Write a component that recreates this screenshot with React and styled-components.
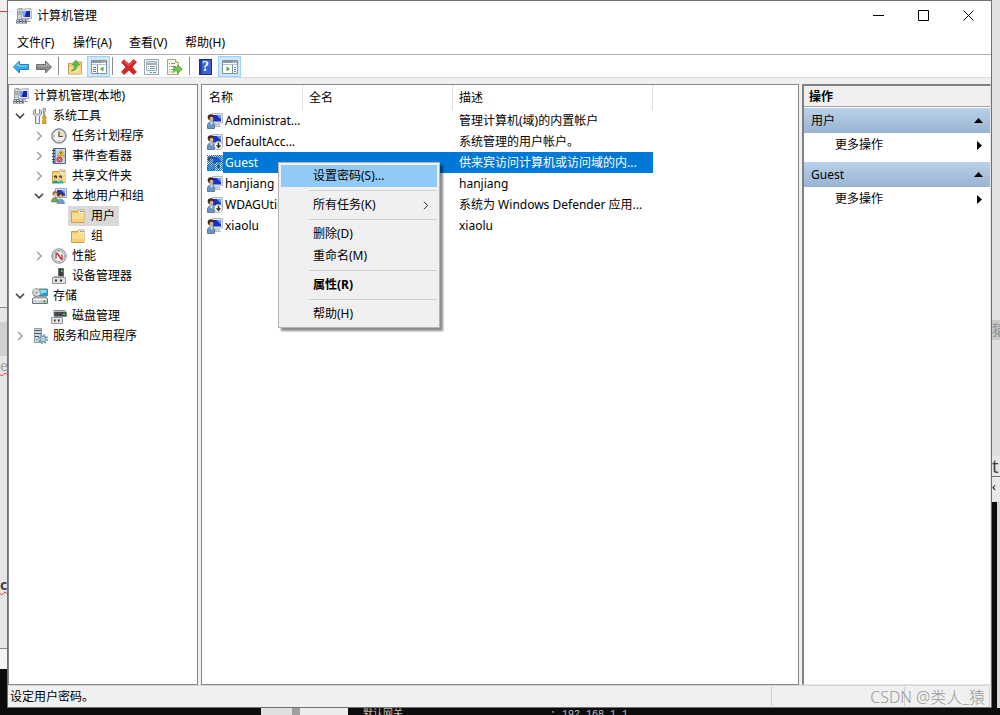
import React, { useState } from "react";
import styled, { createGlobalStyle, css } from "styled-components";

const GlobalStyle = createGlobalStyle`
    * {
        box-sizing: border-box;
    }

    body {
        margin: 0;
        background: #0c0c0c;
        color: #000;
        font-family: "Noto Sans", "Noto Sans CJK SC", sans-serif;
        font-size: 12px;
        line-height: 20px;
    }

    button {
        margin: 0;
        padding: 0;
        border: 0;
        background: none;
        color: inherit;
        font: inherit;
        text-align: left;
    }
`;

/* ---------- icons ---------- */

const Svg = ({ children, size = 16 }) => (
    <svg width={size} height={size} viewBox="0 0 16 16" aria-hidden="true">{children}</svg>
);

const ComputerIcon = () => (
    <Svg>
        <path d="M1.500 1.500 3 .5h3v11H1.500z" fill="#d3d6d9" stroke="#9a9ea3" />
        <path d="M2 4h3M2 6h3" stroke="#85898d" />
        <path d="M5 1.500 15 .5l.5 10H5.500z" fill="#e4e7ec" stroke="#a5abb4" />
        <path d="M6.500 3h7.500v6H7z" fill="#1226b8" />
        <path d="M6.500 3h4L8.500 9H7z" fill="#7fa2ee" />
        <path d="M9 11h4v1.500H9z" fill="#a9adb3" />
        <path d="M9 13h6v1H9z" fill="#9ba0a7" />
        <path d="M.5 11.500h9.500l1 4H0z" fill="#5f6b76" />
        <path d="M1 12.500h8M1 14.500h9" stroke="#c6d0da" strokeDasharray="2 1" />
    </Svg>
);

const ToolsIcon = () => (
    <Svg>
        <path d="M3.500 1v4.500l2 1 2-1V1l2 2v3.500L7.500 8v7.500h-4V8L1.500 6.500V3z" fill="#d9dcdf" stroke="#7d8184" strokeWidth=".9" />
        <path d="M5.500 8v7" stroke="#fff" />
        <path d="M11 .5h2.500V3l-.7 1v4h-1.200V4L11 3z" fill="#c4c7ca" stroke="#77797c" strokeWidth=".7" />
        <path d="M10.500 8.500h3.500v2l-.8 1 .8 1.500v2.500h-3.500V13l.8-1.500-.8-1z" fill="#f2ab1d" stroke="#b97708" strokeWidth=".7" />
    </Svg>
);

const ClockIcon = () => (
    <Svg>
        <circle cx="8" cy="8" r="7.200" fill="#b9bcc0" stroke="#6d7176" strokeWidth="1" />
        <circle cx="8" cy="8" r="5.700" fill="#f8f3e6" stroke="#d9dbdd" />
        <path d="M8 8V2.800A5.200 5.200 0 0 1 13.200 8z" fill="#f3d79c" />
        <path d="M8 3.500V8.500h4" stroke="#3d5068" strokeWidth="1.200" fill="none" />
        <path d="M3 8h1M8 13v-1" stroke="#7c8690" />
    </Svg>
);

const EventIcon = () => (
    <Svg>
        <path d="M2.500 .5h12v15h-12z" fill="#7f9bd0" stroke="#4c628f" />
        <path d="M5 1h9v14H5z" fill="#cfdcf2" />
        <path d="M5 4h9M5 7h9M5 10h9M5 13h9" stroke="#8fa7d2" strokeWidth=".7" />
        <path d="M1 2.500h3M1 5.500h3M1 8.500h3M1 11.500h3M1 14h3" stroke="#3b4554" />
        <path d="M10 2l3.500 6h-7z" fill="#ffd324" stroke="#b88b00" strokeWidth=".7" />
        <path d="M10 4v2M10 6.700v.8" stroke="#3b2f00" />
        <circle cx="8.500" cy="11.500" r="2.600" fill="#e0404a" stroke="#9c2530" strokeWidth=".6" />
        <path d="M7.500 10.500l2 2M9.500 10.500l-2 2" stroke="#fff" strokeWidth=".8" />
    </Svg>
);

const Folder = ({ children }) => (
    <Svg>
        <path d="M1.500 3.500h6l1-1.500h5.500v12.500H1.500z" fill="#efc668" stroke="#cf9f3c" />
        <path d="M9 2.500h5v3H9z" fill="#fff" />
        <path d="M10 3.500h1.500" stroke="#3c8ed8" />
        <path d="M12 3.500h2" stroke="#6aa9e0" />
        <path d="M2 5.500h6l1-1h5V14H2z" fill="#fbdd8f" />
        <path d="M2 11h12v3H2z" fill="#f6d07a" />
        {children}
    </Svg>
);

const SharedIcon = () => (
    <Folder>
        <circle cx="4.500" cy="9" r="1.800" fill="#4b3524" />
        <circle cx="9.500" cy="9" r="1.800" fill="#6a4a30" />
        <circle cx="4" cy="10" r="1" fill="#e0b48a" />
        <circle cx="9" cy="10" r="1" fill="#e0b48a" />
        <path d="M1 15.500c0-3 6-5 6.500 0z" fill="#2d9b6c" />
        <path d="M6.500 15.500c0-3 6-5 6 0z" fill="#35aebc" />
    </Folder>
);

const GroupIcon = () => (
    <Svg>
        <path d="M4.500 .5h11v9h-11z" fill="#dfe3ea" stroke="#9aa4b2" />
        <path d="M6 2h8v6H6z" fill="#1c35c9" />
        <path d="M10 2h4v4z" fill="#7ba3f3" />
        <circle cx="4" cy="5.500" r="2.500" fill="#9a6a34" />
        <circle cx="4.500" cy="6.700" r="1.700" fill="#e7bd92" />
        <path d="M.5 14c0-6 6.500-6 7 0z" fill="#7ba650" stroke="#567a34" strokeWidth=".6" />
        <circle cx="9.500" cy="7" r="2.500" fill="#4a382c" />
        <circle cx="9.800" cy="8.200" r="1.600" fill="#e0b088" />
        <path d="M6 15.500c0-6 7-6 7.500 0z" fill="#6d9fd6" stroke="#44709f" strokeWidth=".6" />
    </Svg>
);

const GaugeIcon = () => (
    <Svg>
        <circle cx="8" cy="8" r="7.200" fill="#e2e4e6" stroke="#85898d" />
        <circle cx="8" cy="8" r="5.500" fill="#fff" stroke="#a2a7ab" />
        <path d="M5 10.500V6l1.500-.5L10 11h1V6.500" fill="none" stroke="#c62828" strokeWidth="1.400" />
        <path d="M4.500 5l1-1M7.500 3.500h1M11 4.500l.5.8" stroke="#555" />
    </Svg>
);

const DeviceIcon = () => (
    <Svg>
        <path d="M7.500 .5h5v8h-5z" fill="#393d40" stroke="#6a6e71" />
        <path d="M10 2h1.500v2H10z" fill="#43d65e" />
        <path d="M1.500 9.500h13v6h-13z" fill="#dedfe1" stroke="#96999c" />
        <path d="M3 8.500h9" stroke="#a4a8ab" />
        <path d="M4 11.500h2v2H4zM9 11.500h2v2H9z" fill="#292c2e" />
    </Svg>
);

const StorageIcon = () => (
    <Svg>
        <path d="M7 1h8.500v7H7z" fill="#24a0cf" stroke="#73858f" />
        <path d="M8 2h6.500v2.500L8 6z" fill="#8fdcf2" />
        <circle cx="4.500" cy="4.500" r="3.900" fill="#d6dadd" stroke="#898e92" />
        <path d="M4.500 4.500l-2-3M4.500 4.500l3 2" stroke="#fff" />
        <circle cx="4.500" cy="4.500" r="1.100" fill="#7c878e" />
        <path d="M2 9h12l1.500 2v4.500H.5V11z" fill="#cfd2d4" stroke="#73777b" />
        <path d="M1 11.500h14" stroke="#f6f7f8" />
        <path d="M11 12.500h3v2h-3z" fill="#42c33d" />
    </Svg>
);

const DiskIcon = () => (
    <Svg>
        <path d="M3 2.500h11l1.500 2v4H3z" fill="#44494d" stroke="#85898c" />
        <path d="M3 3.500h12" stroke="#b8bcbf" />
        <path d="M12 5.500h2v1.500h-2z" fill="#43d65e" />
        <path d="M.5 9.500h11v6H.5z" fill="#dfe0e2" stroke="#94989b" />
        <path d="M3 11.500h1.500v2H3zM7 11.500h1.500v2H7z" fill="#292c2e" />
    </Svg>
);

const ServiceIcon = () => (
    <Svg>
        <path d="M2.500 .5h7v14h-7z" fill="#d3d9de" stroke="#8f999f" />
        <path d="M3 2.500h6M3 5.500h6M3 8.500h4" stroke="#4c575f" />
        <path d="M4 11.500h1.500" stroke="#42b84a" />
        <circle cx="11" cy="11" r="4.200" fill="none" stroke="#6f9dbd" strokeWidth="1.800" strokeDasharray="1.700 1.600" />
        <circle cx="11" cy="11" r="2.700" fill="#e6f1f8" stroke="#6f9dbd" strokeWidth="1.500" />
        <circle cx="11" cy="11" r=".8" fill="#4e7f9f" />
    </Svg>
);

// every second pixel of a 16x16 square
const dither = Array.from({ length: 128 }, (_, i) => {
    const y = Math.floor(i / 8);
    return `M${(i % 8) * 2 + (y % 2)} ${y}h1v1h-1z`;
}).join("");

const UserIcon = ({ disabled, selected }) => (
    <Svg>
        <path d="M5.500 .5h10v9.500h-10z" fill="#e6e8eb" stroke="#b3b8bf" />
        <path d="M6 2h8v6.500H6z" fill="#1730c4" />
        <path d="M9.500 2H14v4.500z" fill="#6f9af2" />
        <path d="M8 11h5v1.500H8zM7 13h7v1H7z" fill="#b4b8be" />
        <circle cx="3.800" cy="4.300" r="3.100" fill="#3b2b21" />
        <circle cx="4.500" cy="5.800" r="2" fill="#dcae86" />
        <path d="M.5 15.500v-4c1-3.500 6-3.500 7 0v4z" fill="#6a97c8" stroke="#48698f" strokeWidth=".8" />
        <path d="M3 9.500l1.500 2L6 9.500z" fill="#fff" />
        {disabled && (
            <>
                <circle cx="11.500" cy="11.500" r="4.200" fill="#fff" stroke="#8e9296" strokeWidth=".8" />
                <path d="M11.500 8.500v4" stroke="#333" strokeWidth="1.600" />
                <path d="M8.700 11.300h5.600l-2.800 3.200z" fill="#333" />
            </>
        )}
        {selected && <path d={dither} fill="#0078d7" shapeRendering="crispEdges" />}
    </Svg>
);

const ArrowIcon = ({ forward }) => (
    <Svg>
        <path
            d={forward ? "M15.500 8 9.500 2v3.500H.5v5h9V14z" : "M.5 8l6-6v3.500h9v5h-9V14z"}
            fill={forward ? "#8b8b8b" : "#35a9ee"}
            stroke={forward ? "#6e6e6e" : "#2480c0"}
        />
        <path d={forward ? "M1.500 7h9V4.500L13.500 7.500" : "M2.500 7.500 5.500 4.500V7h9"} fill="none" stroke={forward ? "#b9b9b9" : "#91dbfb"} />
    </Svg>
);

const UpFolderIcon = () => (
    <Svg>
        <path d="M1.500 4.500h4l1-1.500h8v12h-13z" fill="#f0c97a" stroke="#c79f54" />
        <path d="M2 8h12v6.500H2z" fill="#f8dc98" />
        <path d="M4 12c2.500-1 3.500-3 3.500-6H5.300L9 1l3.500 5h-2.300c0 3.500-2 6-6.200 6z" fill="#55c53c" stroke="#3a9a28" strokeWidth=".6" />
    </Svg>
);

const PaneIcon = ({ right }) => (
    <Svg>
        <path d="M.5 1.500h15v13H.5z" fill="#fff" stroke="#87919a" />
        <path d="M1 2h14v2H1z" fill="#8c98a3" />
        <path d="M11 3h1M13 3h1" stroke="#fff" />
        <path d="M1 5.500h14" stroke="#b8c1c9" />
        <path d={right ? "M10.500 6v8" : "M6.500 6v8"} stroke="#7c8791" />
        <path d={right ? "M12 8.500h2M12 10.500h2M12 12.500h2" : "M2 8.500h3M2 10.500h3M2 12.500h3"} stroke="#4d86bd" />
        <path d={right ? "M4.500 7.500v5L8 10z" : "M12.500 7.500v5L9 10z"} fill="#43ad2c" />
    </Svg>
);

const DeleteIcon = () => (
    <Svg>
        <path d="M3 .7 8 5.200 12.500.5l3 2.500L11 8l4.500 5-3 2.500L8 11l-5 4.500L.5 13 5 8 .5 3.500z" fill="#dc2323" stroke="#b82020" strokeWidth=".7" />
        <path d="M3 2l5 4.700L12.500 2" fill="none" stroke="#f47d73" />
    </Svg>
);

const PropertiesIcon = () => (
    <Svg>
        <path d="M.5 .5h14v15H.5z" fill="#f9fbfc" stroke="#98a2aa" />
        <path d="M2.500 2.500h10v2h-10z" fill="#d7e1e9" stroke="#9eabb5" />
        <path d="M2.500 5.500h10v6h-10z" fill="#fff" stroke="#9eabb5" />
        <path d="M4 7.500h1M6 7.500h5M4 9.500h1M6 9.500h5" stroke="#7594b0" />
        <path d="M6 13.500h2M9 13.500h3" stroke="#35a1d4" />
    </Svg>
);

const ExportIcon = () => (
    <Svg>
        <path d="M.5 .5h8l3 3v12H.5z" fill="#fffce8" stroke="#aaa68a" />
        <path d="M8.500 .5v3h3" fill="#eee6bd" stroke="#aaa68a" />
        <path d="M2 4.500h1M4 4.500h4M2 7.500h1M4 7.500h5M2 10.500h1M4 10.500h2M2 13h1M4 13h4" stroke="#8a8d95" />
        <path d="M6.500 8.500h4V6l4.800 4.200-4.800 4.300V12h-4z" fill="#68ce45" stroke="#3f9e2b" strokeWidth=".7" />
    </Svg>
);

const HelpBox = styled.span`
    width: 13px;
    height: 16px;
    margin-left: 1px;
    border: 1px solid #1d2d82;
    background: linear-gradient(90deg, #2440a5 20%, #3e62d0 20%);
    color: #fff;
    font: bold 14px/14px "Liberation Serif", serif;
    text-align: center;
`;

const Chevron = ({ open }) => (
    <Svg size={10}>
        <path
            d={open ? "M1.500 4.500 8 11l6.500-6.500" : "M5 1.500 11.500 8 5 14.500"}
            fill="none"
            stroke={open ? "#404040" : "#a0a0a0"}
            strokeWidth="2.400"
        />
    </Svg>
);

/* ---------- data ---------- */

const menus = ["文件(F)", "操作(A)", "查看(V)", "帮助(H)"];

const tools = [
    { label: "后退", icon: <ArrowIcon /> },
    { label: "前进", icon: <ArrowIcon forward /> },
    null,
    { label: "上移一级", icon: <UpFolderIcon /> },
    { label: "显示/隐藏控制台树", icon: <PaneIcon />, active: true },
    null,
    { label: "删除", icon: <DeleteIcon /> },
    { label: "属性", icon: <PropertiesIcon /> },
    { label: "导出列表", icon: <ExportIcon /> },
    null,
    { label: "帮助", icon: <HelpBox>?</HelpBox> },
    { label: "显示/隐藏操作窗格", icon: <PaneIcon right />, active: true },
];

const tree = [
    { label: "计算机管理(本地)", icon: <ComputerIcon />, level: 0, root: true },
    { label: "系统工具", icon: <ToolsIcon />, level: 0, open: true },
    { label: "任务计划程序", icon: <ClockIcon />, level: 1, open: false },
    { label: "事件查看器", icon: <EventIcon />, level: 1, open: false },
    { label: "共享文件夹", icon: <SharedIcon />, level: 1, open: false },
    { label: "本地用户和组", icon: <GroupIcon />, level: 1, open: true },
    { label: "用户", icon: <Folder />, level: 2 },
    { label: "组", icon: <Folder />, level: 2 },
    { label: "性能", icon: <GaugeIcon />, level: 1, open: false },
    { label: "设备管理器", icon: <DeviceIcon />, level: 1 },
    { label: "存储", icon: <StorageIcon />, level: 0, open: true },
    { label: "磁盘管理", icon: <DiskIcon />, level: 1 },
    { label: "服务和应用程序", icon: <ServiceIcon />, level: 0, open: false },
];

const users = [
    { name: "Administrat...", desc: "管理计算机(域)的内置帐户" },
    { name: "DefaultAcc...", desc: "系统管理的用户帐户。", disabled: true },
    { name: "Guest", desc: "供来宾访问计算机或访问域的内...", disabled: true },
    { name: "hanjiang", desc: "hanjiang" },
    { name: "WDAGUtilit...", desc: "系统为 Windows Defender 应用...", disabled: true },
    { name: "xiaolu", desc: "xiaolu" },
];

const contextItems = [
    { label: "设置密码(S)...", hot: true },
    null,
    { label: "所有任务(K)", sub: true },
    null,
    { label: "删除(D)" },
    { label: "重命名(M)" },
    null,
    { label: "属性(R)", bold: true },
    null,
    { label: "帮助(H)" },
];

/* ---------- page ---------- */

export default function App() {
    const [folder, setFolder] = useState("用户");
    const [user, setUser] = useState("Guest");

    return (
        <Desktop>
            <GlobalStyle />
            <LeftEdge>
                <EdgeBlock $h={11} $bg="#f0f0f0" />
                <EdgeBlock $h={1} $bg="#e8352c" />
                <EdgeBlock $h={295} $bg="#ececec" />
                <EdgeBlock $h={15} $bg="#e6e6e6" $line="#8a8a8a" />
                <EdgeBlock $h={34} $bg="#d0d0d0" />
                <EdgeWord $color="#a0a0a0">e</EdgeWord>
                <EdgeBlock $h={199} $bg="#e6e6e6" />
                <EdgeWord $color="#404040" $bold>cr</EdgeWord>
                <EdgeBlock $h={53} $bg="#e6e6e6" />
                <EdgeBlock $h={21} $bg="#f4f4f4" $line="#8a8a8a" />
            </LeftEdge>
            <Window>
                <TitleBar>
                    <ComputerIcon />
                    <Title>计算机管理</Title>
                    <Caption aria-label="最小化">
                        <svg width="11" height="11"><path d="M0 5.500h11" stroke="#000" /></svg>
                    </Caption>
                    <Caption aria-label="最大化">
                        <svg width="11" height="11"><path d="M.5.5h10v10H.5z" fill="none" stroke="#000" /></svg>
                    </Caption>
                    <Caption aria-label="关闭">
                        <svg width="11" height="11"><path d="M.5.5l10 10M10.500.5l-10 10" stroke="#000" /></svg>
                    </Caption>
                </TitleBar>
                <MenuBar>
                    {menus.map((m) => <MenuButton key={m}>{m}</MenuButton>)}
                </MenuBar>
                <ToolBar>
                    {tools.map((t, i) =>
                        t ? (
                            <ToolButton key={i} aria-label={t.label} $active={t.active}>{t.icon}</ToolButton>
                        ) : (
                            <ToolGap key={i} />
                        )
                    )}
                </ToolBar>
                <Panes>
                    <TreePane>
                        {tree.map((n) => (
                            <TreeRow key={n.label} $level={n.level} $root={n.root} onClick={() => n.level === 2 && setFolder(n.label)}>
                                {!n.root && <Twisty>{n.open !== undefined && <Chevron open={n.open} />}</Twisty>}
                                <TreeLabel $selected={folder === n.label}>
                                    {n.icon}
                                    <span>{n.label}</span>
                                </TreeLabel>
                            </TreeRow>
                        ))}
                    </TreePane>
                    <ListPane>
                        <UserTable>
                            <colgroup>
                                <col width="101" />
                                <col width="150" />
                                <col width="200" />
                            </colgroup>
                            <thead>
                                <tr>
                                    <th>名称</th>
                                    <th>全名</th>
                                    <th>描述</th>
                                </tr>
                            </thead>
                            <tbody>
                                {users.map((u) => (
                                    <UserRow key={u.name} $selected={u.name === user} onClick={() => setUser(u.name)}>
                                        <td>
                                            <UserCell>
                                                <UserIcon disabled={u.disabled} selected={u.name === user} />
                                                <UserName>{u.name}</UserName>
                                            </UserCell>
                                        </td>
                                        <td />
                                        <td>{u.desc}</td>
                                    </UserRow>
                                ))}
                            </tbody>
                        </UserTable>
                        <ContextMenu role="menu">
                            {contextItems.map((c, i) =>
                                c ? (
                                    <ContextItem key={i} role="menuitem" $hot={c.hot} $bold={c.bold}>
                                        <span>{c.label}</span>
                                        {c.sub && (
                                            <svg width="6" height="9"><path d="M.8.8l4 3.700-4 3.700" fill="none" stroke="#333" /></svg>
                                        )}
                                    </ContextItem>
                                ) : (
                                    <ContextLine key={i} />
                                )
                            )}
                        </ContextMenu>
                    </ListPane>
                    <ActionPane>
                        <ActionTitle>操作</ActionTitle>
                        {["用户", "Guest"].map((s) => (
                            <section key={s}>
                                <ActionHead>
                                    {s}
                                    <svg width="9" height="5"><path d="M0 5 4.500 0 9 5z" /></svg>
                                </ActionHead>
                                <ActionMore>
                                    更多操作
                                    <svg width="5" height="9"><path d="M0 0l5 4.500L0 9z" /></svg>
                                </ActionMore>
                            </section>
                        ))}
                    </ActionPane>
                </Panes>
                <StatusBar>
                    <StatusText>设定用户密码。</StatusText>
                    <StatusPart $w={133} />
                    <StatusPart $w={85} />
                    <StatusPart $w={2} />
                    <Watermark>CSDN @类人_猿</Watermark>
                </StatusBar>
            </Window>
            <RightEdge>
                <EdgeBlock $h={320} $bg="#e2e2e2" />
                <EdgeWord $color="#909090" $bg="#c8c8c8">猿</EdgeWord>
                <EdgeBlock $h={116} $bg="#dedede" />
                <EdgeWord $color="#404040" $big>t</EdgeWord>
                <EdgeBlock $h={26} $bg="#e8e8e8" $line="#707070">‹</EdgeBlock>
                <EdgeRest />
            </RightEdge>
            <BottomEdge>
                <BottomLight />
                <ConsoleText>默认网关</ConsoleText>
                <ConsoleText>: 192.168.1.1</ConsoleText>
            </BottomEdge>
        </Desktop>
    );
}

const Desktop = styled.div`
    display: grid;
    grid-template-columns: 7px minmax(0, 1fr) 8px;
    grid-template-rows: minmax(0, 1fr) 7px;
    height: 100vh;
    overflow: hidden;
`;

const edge = css`
    display: flex;
    flex-direction: column;
    overflow: hidden;
`;

const LeftEdge = styled.div`
    ${edge}
`;

const RightEdge = styled.div`
    ${edge}
`;

const EdgeBlock = styled.div`
    flex: none;
    height: ${(p) => p.$h}px;
    background: ${(p) => p.$bg};
    border-top: ${(p) => (p.$line ? `1px solid ${p.$line}` : "0")};
`;

const EdgeWord = styled.div`
    display: flex;
    flex: none;
    height: 20px;
    background: ${(p) => p.$bg || "#e6e6e6"};
    color: ${(p) => p.$color};
    font-size: ${(p) => (p.$big ? 18 : 14)}px;
    font-weight: ${(p) => (p.$bold ? "bold" : "normal")};
    text-decoration: ${(p) => (p.$bg || p.$big ? "none" : "underline wavy #e03030 1px")};
`;

const EdgeRest = styled.div`
    flex: 1;
    border-right: 3px solid #d8d8d8;
    background: #0c0c0c;
`;

const Window = styled.main`
    display: flex;
    flex-direction: column;
    border: 1px solid #707070;
    background: #f0f0f0;
`;

const TitleBar = styled.header`
    display: flex;
    align-items: center;
    height: 30px;
    padding-left: 8px;
    background: #fff;
`;

const Title = styled.h1`
    flex: 1;
    margin: 0 0 0 5px;
    font-size: 12px;
    font-weight: normal;
`;

const Caption = styled.button`
    display: flex;
    align-items: center;
    align-self: flex-start;
    justify-content: center;
    width: 45px;
    height: 29px;
`;

const MenuBar = styled.nav`
    display: flex;
    height: 24px;
    padding-left: 1px;
    border-bottom: 1px solid #b0b0b0;
    background: #fff;
`;

const MenuButton = styled.button`
    width: 56px;
    padding-left: 8px;
    white-space: nowrap;
`;

const ToolBar = styled.div`
    display: flex;
    height: 23px;
    padding: 1px 0 0 2px;
    border-bottom: 1px solid #dcdcdc;
    background: #fff;
`;

const ToolButton = styled.button`
    display: flex;
    align-items: center;
    width: 23px;
    height: 21px;
    padding-left: ${(p) => (p.$active ? 3 : 2)}px;
    border: 1px solid ${(p) => (p.$active ? "#99d1ff" : "transparent")};
    background: ${(p) => (p.$active ? "#cce8ff" : "none")};
`;

const ToolGap = styled.div`
    width: 8px;
    height: 18px;
    padding-left: 2px;
    margin-top: 1px;

    &::before {
        content: "";
        display: block;
        width: 1px;
        height: 100%;
        background: #8d8d8d;
    }
`;

const Panes = styled.div`
    display: grid;
    flex: 1;
    grid-template-columns: 190px minmax(0, 1fr) 189px;
    gap: 3px;
    min-height: 0;
    padding: 6px 0 0;
`;

const TreePane = styled.div`
    overflow: hidden;
    padding-top: 1px;
    border: 1px solid #828790;
    background: #fff;
`;

const TreeRow = styled.div`
    display: flex;
    height: 20px;
    padding-left: ${(p) => (p.$root ? 2 : 4 + p.$level * 19)}px;
`;

const Twisty = styled.span`
    display: flex;
    align-items: center;
    justify-content: center;
    width: 14px;
    margin-right: 3px;
`;

const TreeLabel = styled.button`
    display: flex;
    align-items: center;
    gap: 5px;
    padding: 0 4px 0 2px;
    background: ${(p) => (p.$selected ? "#d9d9d9" : "transparent")};
    white-space: nowrap;
`;

const ListPane = styled.div`
    position: relative;
    border: 1px solid #828790;
    background: #fff;
`;

const UserTable = styled.table`
    width: 451px;
    border-collapse: separate;
    border-spacing: 0;
    table-layout: fixed;

    th {
        height: 25px;
        padding: 0 6px;
        border-right: 1px solid #e0e0e0;
        font-weight: normal;
        text-align: left;
    }

    th:first-child {
        padding-left: 7px;
    }

    td {
        height: 21px;
        padding: 0 0 0 6px;
        overflow: hidden;
        white-space: nowrap;
    }

    td:first-child {
        padding-left: 5px;
    }
`;

const UserRow = styled.tr`
    ${(p) => p.$selected && css`
        background: linear-gradient(90deg, #fff 21px, #0078d7 21px);
        color: #fff;
    `}
`;

const UserCell = styled.div`
    display: flex;
    align-items: center;
    height: 20px;
`;

const UserName = styled.span`
    padding-left: 2px;
`;

const ContextMenu = styled.div`
    position: absolute;
    top: 77px;
    left: 76px;
    width: 162px;
    padding: 2px;
    border: 1px solid #b4b4b4;
    background: #f0f0f0;
    box-shadow: 3px 3px 2px rgba(0, 0, 0, 0.45);
`;

const ContextItem = styled.button`
    display: flex;
    align-items: center;
    justify-content: space-between;
    width: 100%;
    height: 22px;
    padding: 0 8px 0 32px;
    background: ${(p) => (p.$hot ? "#91c9f7" : "transparent")};
    font-weight: ${(p) => (p.$bold ? "bold" : "normal")};
`;

const ContextLine = styled.div`
    height: 1px;
    margin: 3px 0 3px 28px;
    background: #d0d0d0;
`;

const ActionPane = styled.aside`
    border: 1px solid #a0a0a0;
    border-width: 2px 1px 1px 2px;
    border-color: #808080 #e3e3e3 #e3e3e3 #808080;
    background: #fff;
`;

const ActionTitle = styled.h2`
    height: 21px;
    margin: 0 0 1px;
    padding-left: 5px;
    border-bottom: 1px solid #a0a0a0;
    background: #f0f0f0;
    font-size: 12px;
    line-height: 21px;
`;

const actionRow = css`
    display: flex;
    align-items: center;
    justify-content: space-between;
    width: 100%;
`;

const ActionHead = styled.button`
    ${actionRow}
    height: 25px;
    padding: 0 7px;
    background: linear-gradient(#b9d1ea, #99b4d1);
`;

const ActionMore = styled.button`
    ${actionRow}
    height: 24px;
    margin-bottom: 5px;
    padding: 0 8px 0 31px;
`;

const StatusBar = styled.footer`
    position: relative;
    display: flex;
    height: 22px;
    padding: 1px 0;
    border-top: 1px solid #d7d7d7;
`;

const StatusText = styled.div`
    flex: 1;
    padding-left: 2px;
`;

const StatusPart = styled.div`
    width: ${(p) => p.$w}px;
    border-left: 1px solid #d0d0d0;
`;

const Watermark = styled.span`
    position: absolute;
    top: 1px;
    right: 6px;
    color: #999;
    font-size: 16px;
    font-weight: 300;
    white-space: nowrap;
`;

const BottomEdge = styled.div`
    display: flex;
    grid-column: 1 / -1;
    overflow: hidden;
    padding-left: 261px;
    background: #0c0c0c;
`;

const BottomLight = styled.div`
    width: 87px;
    margin-right: 15px;
    background: linear-gradient(90deg, #e0e0e0 31px, #a0a0a0 31px, #a0a0a0 39px, #ececec 39px);
`;

const ConsoleText = styled.span`
    width: 187px;
    color: #c0c0c0;
    font: 10px/14px "Liberation Mono", "Noto Sans CJK SC", monospace;
    white-space: nowrap;
`;
